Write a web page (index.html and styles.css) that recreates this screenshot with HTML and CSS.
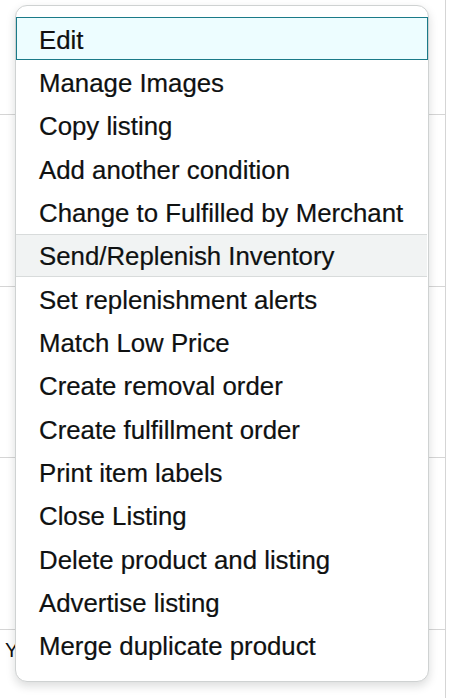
FILE: index.html
```html
<!DOCTYPE html>
<html lang="en">
<head>
<meta charset="utf-8">
<title>Actions menu</title>
<link rel="stylesheet" href="styles.css">
</head>
<body>
<div class="table">
  <div class="trow first"></div>
  <div class="trow"></div>
  <div class="trow"></div>
  <div class="trow"></div>
  <div class="trow last"><span class="cell-text">Yes</span></div>
</div>
<ul class="menu">
  <li class="item focused">Edit</li>
  <li class="item">Manage Images</li>
  <li class="item">Copy listing</li>
  <li class="item">Add another condition</li>
  <li class="item">Change to Fulfilled by Merchant</li>
  <li class="item hover">Send/Replenish Inventory</li>
  <li class="item">Set replenishment alerts</li>
  <li class="item">Match Low Price</li>
  <li class="item">Create removal order</li>
  <li class="item">Create fulfillment order</li>
  <li class="item">Print item labels</li>
  <li class="item">Close Listing</li>
  <li class="item">Delete product and listing</li>
  <li class="item">Advertise listing</li>
  <li class="item">Merge duplicate product</li>
</ul>
</body>
</html>
```
FILE: styles.css
```css
html, body {
  margin: 0;
  padding: 0;
  background: #ffffff;
}
body {
  width: 464px;
  height: 698px;
  overflow: hidden;
  position: relative;
  font-family: "Liberation Sans", Arial, sans-serif;
  color: #0f1111;
}
.table {
  width: 445px;
  height: 698px;
  border-right: 1px solid #d5d5d5;
  display: flex;
  flex-direction: column;
}
.trow {
  box-sizing: border-box;
  height: 171.5px;
  border-bottom: 1px solid #d5d5d5;
  flex: none;
}
.trow.first {
  height: 115px;
}
.trow.last {
  border-bottom: none;
  flex: 1;
  display: flex;
  align-items: flex-start;
  padding-top: 8px;
  padding-left: 5px;
}
.cell-text {
  font-size: 20px;
  line-height: 24px;
}
.menu {
  position: absolute;
  left: 15px;
  top: 5px;
  width: 414px;
  height: 677px;
  box-sizing: border-box;
  margin: 0;
  padding: 11px 0 14px;
  list-style: none;
  background: #ffffff;
  border: 1px solid #cfd2d2;
  border-radius: 12px;
  box-shadow: 0 4px 10px rgba(15, 17, 17, 0.15);
}
.item {
  box-sizing: border-box;
  height: 43.33px;
  display: flex;
  align-items: center;
  padding-left: 23px;
  padding-top: 3px;
  font-size: 25.8px;
  white-space: nowrap;
  -webkit-text-stroke: 0.2px #0f1111;
  border: 1px solid transparent;
  border-left: none;
  border-right: none;
}
.item.focused {
  background: #edfdff;
  border: 1px solid #1a7a88;
  padding-left: 22px;
}
.item.hover {
  background: #f1f3f3;
  border-top: 1px solid #d8dbdb;
  border-bottom: 1px solid #d8dbdb;
  margin-right: 1px;
}
```
